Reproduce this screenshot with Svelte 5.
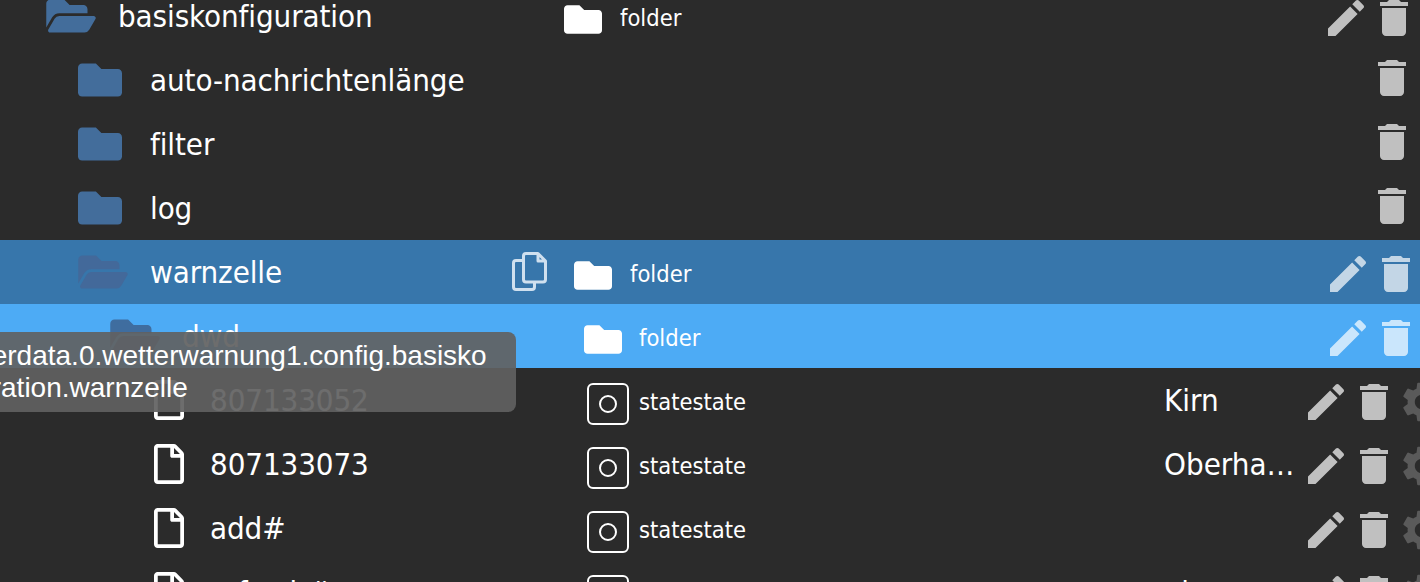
<script>
  const EDIT = 'M3 17.25V21h3.75L17.81 9.94l-3.75-3.75L3 17.25zM20.71 7.04c.39-.39.39-1.02 0-1.41l-2.34-2.34c-.39-.39-1.02-.39-1.41 0l-1.83 1.83 3.75 3.75 1.83-1.83z';
  const TRASH = 'M6 19c0 1.1.9 2 2 2h8c1.1 0 2-.9 2-2V7H6v12zM19 4h-3.5l-1-1h-5l-1 1H5v2h14V4z';
  const GEAR = 'M19.14 12.94c.04-.3.06-.61.06-.94 0-.32-.02-.64-.07-.94l2.03-1.58c.18-.14.23-.41.12-.61l-1.92-3.32c-.12-.22-.37-.29-.59-.22l-2.39.96c-.5-.38-1.03-.7-1.62-.94l-.36-2.54c-.04-.24-.24-.41-.48-.41h-3.84c-.24 0-.43.17-.47.41l-.36 2.54c-.59.24-1.13.57-1.62.94l-2.39-.96c-.22-.08-.47 0-.59.22L2.74 8.87c-.12.21-.08.47.12.61l2.03 1.58c-.05.3-.09.63-.09.94s.02.64.07.94l-2.03 1.58c-.18.14-.23.41-.12.61l1.92 3.32c.12.22.37.29.59.22l2.39-.96c.5.38 1.03.7 1.62.94l.36 2.54c.05.24.24.41.48.41h3.84c.24 0 .44-.17.47-.41l.36-2.54c.59-.24 1.13-.56 1.62-.94l2.39.96c.22.08.47 0 .59-.22l1.92-3.32c.12-.22.07-.47-.12-.61l-2.01-1.58zM12 15.6c-1.98 0-3.6-1.62-3.6-3.6s1.62-3.6 3.6-3.6 3.6 1.62 3.6 3.6-1.62 3.6-3.6 3.6z';
  const CLOSED = 'M464 128H272l-64-64H48C21.49 64 0 85.49 0 112v288c0 26.51 21.49 48 48 48h416c26.51 0 48-21.49 48-48V176c0-26.51-21.49-48-48-48z';
  const OPEN = 'M572.694 292.093L500.27 416.248A63.997 63.997 0 0 1 444.989 448H45.025c-18.523 0-30.064-20.093-20.731-36.093l72.424-124.155A64 64 0 0 1 152 256h399.964c18.523 0 30.064 20.093 20.73 36.093zM152 224h328v-48c0-26.51-21.49-48-48-48H272l-64-64H48C21.49 64 0 85.49 0 112v278.046l69.077-118.418C86.214 242.25 117.989 224 152 224z';
  const FILE = 'M369.9 97.9L286 14C277 5 264.8-.1 252.1-.1H48C21.5 0 0 21.5 0 48v416c0 26.5 21.5 48 48 48h288c26.5 0 48-21.5 48-48V131.9c0-12.7-5.1-25-14.1-34zM332.1 128H256V51.9l76.1 76.1zM48 464V48h160v104c0 13.3 10.7 24 24 24h104v288H48z';

  const rows = [
    { name: 'basiskonfiguration', level: 0, icon: 'open', type: 'folder', acts: 'a0' },
    { name: 'auto-nachrichtenlänge', level: 1, icon: 'closed', acts: 'a1' },
    { name: 'filter', level: 1, icon: 'closed', acts: 'a1' },
    { name: 'log', level: 1, icon: 'closed', acts: 'a1' },
    { name: 'warnzelle', level: 1, icon: 'open', type: 'folder', acts: 'a2', tone: 'hover', copy: true },
    { name: 'dwd', level: 2, icon: 'open', type: 'folder', acts: 'a2', tone: 'selected' },
    { name: '807133052', level: 3, icon: 'file', type: 'state', value: 'Kirn', acts: 'a3' },
    { name: '807133073', level: 3, icon: 'file', type: 'state', value: 'Oberhausen', acts: 'a3' },
    { name: 'add#', level: 3, icon: 'file', type: 'state', acts: 'a3' },
    { name: 'refresh#', level: 3, icon: 'file', type: 'state', value: 'ein', acts: 'a3' }
  ];
</script>

<div class="viewport">
  <div class="list">
    {#each rows as r}
      <div class="row l{r.level} {r.tone ?? ''} {r.acts}">
        <div class="name">
          {#if r.icon === 'file'}
            <svg class="file" viewBox="0 0 384 512"><path d={FILE} /></svg>
          {:else if r.icon === 'open'}
            <svg class="fold open" viewBox="0 0 576 512"><path d={OPEN} /></svg>
          {:else}
            <svg class="fold" viewBox="0 0 512 512"><path d={CLOSED} /></svg>
          {/if}
          <span class="label">{r.name}</span>
          {#if r.copy}
            <svg class="copy" viewBox="0 0 40 44">
              <path d="M16 3.5h12l7.500 7.500v18.500a2.500 2.500 0 0 1-2.500 2.500H16a2.500 2.500 0 0 1-2.500-2.500V6a2.500 2.500 0 0 1 2.500-2.500zM28 3.500V11h7.500" />
              <path d="M13.500 10.500H6A2.500 2.500 0 0 0 3.500 13v24a2.500 2.500 0 0 0 2.500 2.500h16a2.500 2.500 0 0 0 2.500-2.500v-5" />
            </svg>
          {/if}
        </div>
        <div class="type">
          {#if r.type === 'folder'}
            <svg class="tfold" viewBox="0 0 512 384"><path transform="translate(0 -64)" d={CLOSED} /></svg>
            <span class="ttext">folder</span>
          {:else if r.type === 'state'}
            <span class="state"><i></i></span>
            <span class="ttext">statestate</span>
          {/if}
        </div>
        <div class="value">{r.value ?? ''}</div>
        <div class="actions">
          {#if r.acts !== 'a1'}
            <svg viewBox="0 0 24 24"><path d={EDIT} /></svg>
          {/if}
          <svg viewBox="0 0 24 24"><path d={TRASH} /></svg>
          {#if r.acts === 'a3'}
            <svg class="gear" viewBox="0 0 24 24"><path d={GEAR} /></svg>
          {/if}
        </div>
      </div>
    {/each}
  </div>
  <div class="tooltip">0_userdata.0.wetterwarnung1.config.basiskonfiguration.warnzelle</div>
</div>

<style>
  :global(body) { background: #2b2b2b; }
  .viewport {
    position: relative;
    height: 582px;
    overflow: hidden;
    background: #2b2b2b;
    color: #fff;
    font-family: "DejaVu Sans", sans-serif;
    font-stretch: condensed;
  }
  .list { margin-top: -16px; }
  .row {
    display: grid;
    grid-template-columns: 552px 612px 136px 120px;
    height: 64px;
    align-items: center;
  }
  .row.hover { background: #3776ab; }
  .row.selected { background: #4dabf5; }

  .name { display: flex; align-items: center; height: 100%; position: relative; }
  .l0 .name { padding-left: 46px; }
  .l1 .name { padding-left: 78px; }
  .l2 .name { padding-left: 110px; }
  .l3 .name { padding-left: 154px; }
  .fold { width: 44px; height: 44px; fill: #436d9b; flex: none; margin-right: 28px; }
  .fold.open { width: 50px; margin-right: 22px; }
  .hover .fold.open { fill: #43699a; }
  .selected .fold.open { fill: #3f6d9f; }
  .file { width: 30px; height: 40px; fill: #fff; flex: none; margin-right: 26px; }
  .label { font-size: 31px; letter-spacing: -0.1px; white-space: nowrap; }
  .copy { position: absolute; left: 510px; top: 10px; width: 40px; height: 44px; fill: none; stroke: #cfe0ef; stroke-width: 3; stroke-linejoin: round; }

  .type { display: flex; align-items: center; height: 100%; font-size: 23.5px; }
  .ttext { position: relative; top: 2px; }
  .l0 .type { padding-left: 12px; }
  .l1 .type { padding-left: 22px; }
  .l2 .type { padding-left: 32px; }
  .l3 .type { padding-left: 35px; }
  .tfold { width: 38px; height: 29px; fill: #fff; margin-right: 18px; flex: none; margin-top: 7px; }
  .l2 .tfold { margin-right: 17px; }
  .state {
    box-sizing: border-box;
    width: 42px; height: 42px;
    border: 2px solid #fff; border-radius: 6px;
    display: flex; align-items: center; justify-content: center;
    margin-right: 10px; flex: none; margin-top: 8px;
  }
  .state i { box-sizing: border-box; width: 18px; height: 18px; border: 2px solid #fff; border-radius: 50%; display: block; }

  .value {
    font-size: 31px;
    width: 132px;
    white-space: nowrap; overflow: hidden; text-overflow: ellipsis;
  }
  .actions { display: flex; height: 100%; align-items: center; overflow: hidden; }
  .actions svg { width: 48px; height: 48px; fill: #fff; opacity: .7; flex: none; }
  .actions .gear { opacity: .22; }
  .a0 .actions { padding-left: 22px; margin-top: 4px; }
  .a1 .actions { padding-left: 68px; margin-top: -4px; }
  .a2 .actions { padding-left: 24px; margin-top: 4px; }
  .a3 .actions { padding-left: 2px; margin-top: 4px; }

  .tooltip {
    position: absolute;
    left: -85px;
    top: 332px;
    width: 601px;
    box-sizing: border-box;
    padding: 8px 16px;
    height: 80px;
    border-radius: 8px;
    background: rgba(97, 97, 97, .92);
    font-family: "Liberation Sans", sans-serif;
    font-stretch: normal;
    font-size: 28px;
    line-height: 32px;
    color: #fff;
    word-break: break-all;
  }
</style>
